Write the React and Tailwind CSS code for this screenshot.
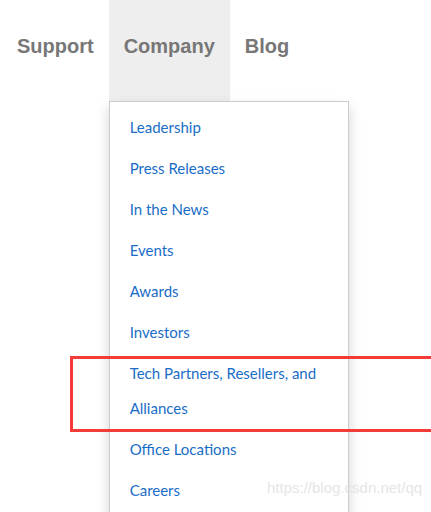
import React from 'react';

const items = [
  'Leadership',
  'Press Releases',
  'In the News',
  'Events',
  'Awards',
  'Investors',
  'Tech Partners, Resellers, and Alliances',
  'Office Locations',
  'Careers',
];

export default function App() {
  return (
    <div className="relative h-[512px] w-[431px] overflow-hidden bg-white">
      <nav className="flex pl-[2px] font-['Liberation_Sans',Arial,sans-serif] text-[20px] font-bold text-[#777]">
        <a className="block h-[101px] px-[15px] pt-[34px] leading-6">Support</a>
        <div className="relative">
          <a className="block h-[101px] bg-[#eeeeee] px-[15px] pt-[34px] leading-6">Company</a>
          {/* open menu */}
          <ul className="absolute left-0 top-[101px] w-[240px] border border-[#cccccc] bg-white py-[5px] shadow-[0_6px_12px_rgba(0,0,0,0.175)] font-['Lato','Noto_Sans',sans-serif] text-[15px] font-normal text-[#1a6dc7]">
            {items.map((item) => (
              <li key={item}>
                <a className="block px-5 py-[3px] leading-[35px]">{item}</a>
              </li>
            ))}
          </ul>
        </div>
        <a className="block h-[101px] px-[15px] pt-[34px] leading-6">Blog</a>
      </nav>

      {/* annotation box */}
      <div className="pointer-events-none absolute left-[70px] top-[356px] h-[76px] w-[380px] border-[3px] border-[#f53a3a]" />

      {/* watermark */}
      <div className="pointer-events-none absolute left-[267px] top-[477px] whitespace-nowrap font-['Liberation_Sans',Arial,sans-serif] text-[15px] text-[#e0e0e0] opacity-80">
        https://blog.csdn.net/qq
      </div>
    </div>
  );
}
